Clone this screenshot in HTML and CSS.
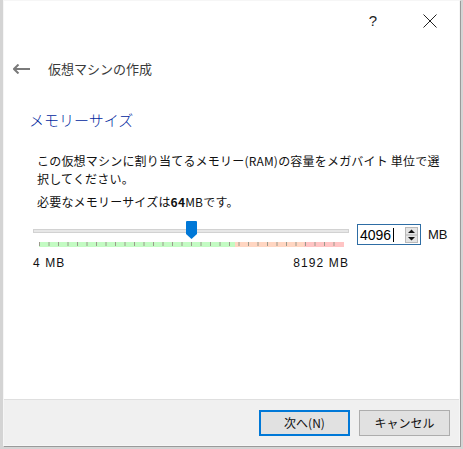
FILE: index.html
```html
<!DOCTYPE html>
<html lang="ja">
<head>
<meta charset="utf-8">
<title>仮想マシンの作成</title>
<link rel="stylesheet" href="styles.css">
</head>
<body>
<div class="dialog">
  <div class="titlebar">
    <span class="help">?</span>
    <svg class="close" width="14" height="14" viewBox="0 0 14 14"><path d="M0.5 0.5 L13.5 13.5 M13.5 0.5 L0.5 13.5" stroke="#222" stroke-width="1" fill="none"/></svg>
  </div>
  <div class="nav">
    <svg class="back" width="17" height="10" viewBox="0 0 17 10"><path d="M1 5 H17 M5.5 0.5 L1 5 L5.5 9.5" stroke="#7a7a7a" stroke-width="2" fill="none"/></svg>
    <span class="nav-title">仮想マシンの作成</span>
  </div>
  <div class="content">
    <h1 class="heading">メモリーサイズ</h1>
    <p class="desc">この仮想マシンに割り当てるメモリー(RAM)の容量をメガバイト 単位で選<br>択してください。</p>
    <p class="desc need">必要なメモリーサイズは<b>64</b>MBです。</p>
    <div class="slider-row">
      <div class="slider">
        <div class="track-wrap">
          <div class="track"></div>
          <svg class="thumb" width="11" height="18" viewBox="0 0 11 18"><path d="M0 1 Q0 0 1 0 H10 Q11 0 11 1 V13 L5.5 18 L0 13 Z" fill="#0078d7"/></svg>
        </div>
        <svg class="ticks" width="305" height="5" viewBox="0 0 305 5">
          <rect x="0" y="0" width="196" height="5" fill="#c3fbc3"/>
          <rect x="196" y="0" width="69" height="5" fill="#ffd6c2"/>
          <rect x="265" y="0" width="40" height="5" fill="#ffc4c4"/>
          <g stroke="#9a9a8c" stroke-width="1">
            <path d="M0.5 0 V4 M10 0 V4 M19.5 0 V4 M29 0 V4 M38.5 0 V4 M48 0 V4 M57.5 0 V4 M67 0 V4 M76.5 0 V4 M86 0 V4 M95.5 0 V4 M105 0 V4 M114.5 0 V4 M124 0 V4 M133.5 0 V4 M143 0 V4 M152.5 0 V4 M162 0 V4 M171.5 0 V4 M181 0 V4 M190.5 0 V4 M200 0 V4 M209.5 0 V4 M219 0 V4 M228.5 0 V4 M238 0 V4 M247.5 0 V4 M257 0 V4 M266.5 0 V4 M276 0 V4 M285.5 0 V4 M295 0 V4"/>
          </g>
        </svg>
        <div class="scale">
          <span>4 MB</span>
          <span>8192 MB</span>
        </div>
      </div>
      <div class="spin">
        <span class="spin-value">4096</span><span class="caret"></span>
        <div class="spin-btn">
          <svg width="13" height="16" viewBox="0 0 13 16"><path d="M3 6 L6.5 2.5 L10 6 Z M3 10 L6.5 13.5 L10 10 Z" fill="#111"/><path d="M1 8 H12" stroke="#b5b5b5" stroke-width="1"/></svg>
        </div>
      </div>
      <span class="unit">MB</span>
    </div>
  </div>
  <div class="footer">
    <button class="btn primary">次へ(N)</button>
    <button class="btn">キャンセル</button>
  </div>
</div>
</body>
</html>
```
FILE: styles.css
```css
html, body {
  margin: 0;
  padding: 0;
}
body {
  background: #d4d4d4;
  width: 463px;
  height: 449px;
  overflow: hidden;
  padding: 0 3px;
  box-sizing: border-box;
  font-family: "Noto Sans CJK JP", "Noto Sans", sans-serif;
}
.dialog {
  width: 457px;
  height: 446px;
  background: #ffffff;
  display: flex;
  flex-direction: column;
  box-sizing: border-box;
  border: 1px solid #f6f6f6;
  box-shadow: 1px 1px 0 #9a9a9a;
}
.titlebar {
  height: 37px;
  display: flex;
  align-items: center;
  justify-content: flex-end;
  padding-right: 22px;
  padding-top: 2px;
  box-sizing: border-box;
}
.help {
  font-family: "Liberation Sans", sans-serif;
  font-size: 15px;
  color: #222;
  margin-right: 46px;
  line-height: 15px;
}
.close {
  display: block;
}
.nav {
  height: 20px;
  margin-top: 21px;
  display: flex;
  align-items: center;
  padding-left: 9px;
}
.back {
  display: block;
  margin-right: 18px;
}
.nav-title {
  font-size: 13px;
  line-height: 20px;
  color: #3a3a3a;
}
.content {
  padding-left: 29px;
}
.heading {
  margin: 29px 0 0 -4px;
  font-size: 15px;
  line-height: 24px;
  height: 24px;
  font-weight: 300;
  color: #00279e;
}
.desc {
  margin: 20px 0 0 4px;
  font-size: 12px;
  line-height: 18px;
  color: #111;
  letter-spacing: 0.2px;
}
.desc.need {
  margin-top: 5px;
}
.desc b {
  font-weight: bold;
}
.slider-row {
  display: flex;
  align-items: flex-start;
  margin-top: 10px;
}
.slider {
  width: 316px;
}
.track-wrap {
  position: relative;
  height: 18px;
}
.track {
  position: absolute;
  left: 0;
  right: 0;
  top: 8px;
  height: 4px;
  background: #e7e7e7;
  border: 1px solid #d2d2d2;
  box-sizing: border-box;
}
.thumb {
  position: absolute;
  left: 153px;
  top: 0;
}
.ticks {
  display: block;
  margin: 3px 0 0 6px;
}
.scale {
  display: flex;
  justify-content: space-between;
  margin-top: 9px;
  font-family: "Liberation Sans", sans-serif;
  font-size: 12px;
  line-height: 14px;
  letter-spacing: 1.1px;
  color: #111;
}
.spin {
  margin: 3px 0 0 8px;
  width: 64px;
  height: 21px;
  border: 1px solid #2e6da4;
  box-sizing: border-box;
  display: flex;
  align-items: center;
  padding-left: 2px;
}
.spin-value {
  font-family: "Liberation Sans", sans-serif;
  font-size: 14px;
  line-height: 16px;
  color: #000;
}
.caret {
  width: 1px;
  height: 14px;
  background: #000;
  margin-left: 2px;
}
.spin-btn {
  margin-left: auto;
  margin-right: 2px;
  width: 13px;
  height: 16px;
  background: #e4e4e4;
  border: 1px solid #b9b9b9;
  box-sizing: border-box;
  display: flex;
  align-items: center;
  justify-content: center;
  overflow: hidden;
}
.spin-btn svg {
  display: block;
  flex: none;
}
.unit {
  margin: 7px 0 0 7px;
  font-family: "Liberation Sans", sans-serif;
  font-size: 13px;
  line-height: 14px;
  color: #111;
}
.footer {
  margin-top: auto;
  height: 46px;
  background: #f0f0f0;
  border-top: 1px solid #dfdfdf;
  box-sizing: border-box;
  display: flex;
  justify-content: flex-end;
  align-items: flex-start;
  padding: 10px 9px 0 0;
  gap: 9px;
}
.btn {
  width: 91px;
  height: 26px;
  background: #e1e1e1;
  border: 1px solid #adadad;
  font-family: "Noto Sans CJK JP", sans-serif;
  font-size: 12px;
  color: #111;
  padding: 0;
  margin: 0;
  line-height: 22px;
}
.btn.primary {
  border: 2px solid #0078d7;
}
```
